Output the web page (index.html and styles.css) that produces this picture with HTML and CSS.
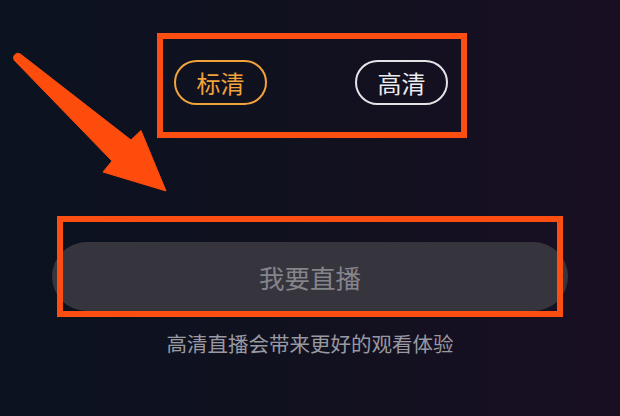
FILE: index.html
```html
<!DOCTYPE html>
<html lang="zh-CN">
<head>
<meta charset="utf-8">
<title>直播清晰度</title>
<link rel="stylesheet" href="styles.css">
</head>
<body>
<main class="page">
  <section class="quality">
    <span class="pill pill-sd">标清</span>
    <span class="pill pill-hd">高清</span>
  </section>
  <div class="cta-wrap">
    <button class="cta" type="button">我要直播</button>
    <div class="mark"></div>
  </div>
  <p class="hint">高清直播会带来更好的观看体验</p>
  <svg class="arrow" width="180" height="200" viewBox="0 0 180 200" aria-hidden="true">
    <path d="M21 54.5 L131 140 L141 130.5 L166 191 L103 172 L112 161 L15 61 A4.3 4.3 0 0 1 21 54.5 Z" fill="#fd4c0c" stroke="#fd4c0c" stroke-width="1" stroke-linejoin="round"/>
  </svg>
</main>
</body>
</html>
```
FILE: styles.css
```css
html, body {
  margin: 0;
  padding: 0;
}
body {
  width: 620px;
  height: 416px;
  overflow: hidden;
  background: linear-gradient(90deg, #0b1220 0%, #11111f 50%, #190f23 100%);
  font-family: "Noto Sans CJK SC", "Noto Sans", sans-serif;
}
.page {
  position: relative;
  height: 416px;
  display: flex;
  flex-direction: column;
  align-items: center;
  padding-top: 33px;
  box-sizing: border-box;
}
.quality {
  width: 310px;
  margin-left: 4px;
  box-sizing: border-box;
  border: 6px solid #fc4e10;
  display: flex;
  justify-content: space-between;
  padding: 21px 13px 27px 11px;
}
.pill {
  width: 93px;
  height: 45px;
  box-sizing: border-box;
  border-radius: 23px;
  border: 2px solid;
  display: flex;
  align-items: center;
  justify-content: center;
  font-size: 24px;
  line-height: 1;
}
.pill-sd {
  color: #f2a23a;
  border-color: #f2a23a;
}
.pill-hd {
  color: #ececef;
  border-color: #e4e4e8;
}
.cta-wrap {
  position: relative;
  margin-top: 104px;
  width: 516px;
  height: 69px;
}
.cta {
  width: 100%;
  height: 100%;
  border: 0;
  border-radius: 35px;
  background: #36353e;
  color: #85848b;
  font-family: inherit;
  font-size: 25.5px;
  line-height: 1;
  padding: 0;
}
.mark {
  position: absolute;
  left: 5px;
  top: -26px;
  width: 506px;
  height: 101px;
  box-sizing: border-box;
  border: 6px solid #fc4e10;
}
.hint {
  margin: 18px 0 0;
  font-size: 20.5px;
  line-height: 28px;
  color: #9a99a1;
}
.arrow {
  position: absolute;
  left: 0;
  top: 0;
}
```
